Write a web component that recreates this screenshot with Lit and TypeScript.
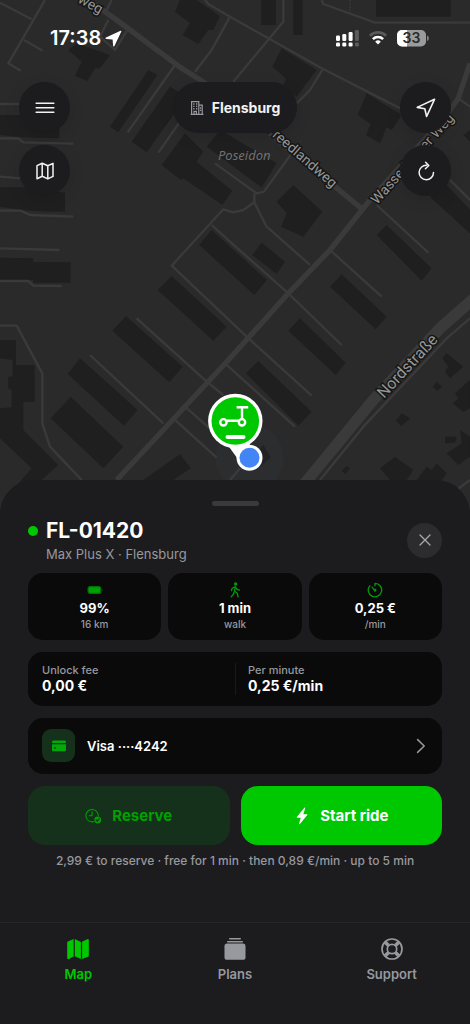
import { LitElement, html, css, svg } from "lit";
import { customElement, property } from "lit/decorators.js";

const icons = {
  menu: svg`<svg viewBox="0 0 20 20" width="20" height="20" fill="none" stroke="currentColor" stroke-width="1.6" stroke-linecap="round"><path d="M1.2 5.3h17.6M1.2 9.8h17.6M1.2 14.3h17.6"/></svg>`,
  map: svg`<svg viewBox="0 0 20 20" width="20" height="20" fill="none" stroke="currentColor" stroke-width="1.5" stroke-linejoin="round"><path d="M2 4.6 7.2 2.2l5.6 2.6L18 2.4v13l-5.2 2.5-5.6-2.6L2 17.7zM7.2 2.2v13.1M12.8 4.8v13.1"/></svg>`,
  locate: svg`<svg viewBox="0 0 22 22" width="22" height="22" fill="none" stroke="currentColor" stroke-width="1.6" stroke-linejoin="round"><path d="M19.5 2.3 2.2 10.4 9.8 11.8 11.6 19.5z"/></svg>`,
  reload: svg`<svg viewBox="0 0 20 20" width="20" height="20" fill="none" stroke="currentColor" stroke-width="1.5" stroke-linecap="round" stroke-linejoin="round"><path d="M10.6 4.3A7.2 7.2 0 1 0 17.5 11.5M9.6 1.2l3.2 3.3-3.4 3.2"/></svg>`,
  building: svg`<svg viewBox="0 0 14 16" width="14" height="16" fill="none" stroke="currentColor" stroke-width="1.2"><path d="M1.6 14.4V1.6h7.2v12.8M8.8 5.2h3.4v9.2M.6 14.4h12.8"/><path d="M3.2 4h1.3M6 4h1.3M3.2 6.4h1.3M6 6.4h1.3M3.2 8.8h1.3M6 8.8h1.3M10 8h1.2M10 10.4h1.2" stroke-width="1.4"/><path d="M4 14.4v-3h2.4v3"/></svg>`,
  close: svg`<svg viewBox="0 0 12 12" width="12" height="12" fill="none" stroke="currentColor" stroke-width="1.3" stroke-linecap="round"><path d="m1 1 10 10M11 1 1 11"/></svg>`,
  battery: svg`<svg viewBox="0 0 16 16" width="16" height="16"><rect x="1.1" y="4.6" width="12.6" height="6.8" rx="2" fill="#00a008" stroke="#007200" stroke-width="1.2"/><path d="M14.7 6.4c1 .3 1 2.9 0 3.2z" fill="#007200"/></svg>`,
  walk: svg`<svg viewBox="0 0 16 16" width="16" height="16" fill="none" stroke="currentColor" stroke-width="1.3" stroke-linecap="round" stroke-linejoin="round"><circle cx="8.6" cy="2" r="1" fill="currentColor"/><path d="M8.2 4.8 7.6 9l2.6 2.2.9 3.6M7.2 10 6.6 12l-2.4 2.8M8 4.7 5.2 6.2 4.5 8.6M8.6 5l1.4 2.4 2.4.8"/></svg>`,
  timer: svg`<svg viewBox="0 0 16 16" width="16" height="16" fill="none" stroke="currentColor" stroke-width="1.3" stroke-linecap="round"><path d="M8 1.4A6.7 6.7 0 1 1 2.8 3.8M8 1.4v2.4M8 8.4 5 5.1"/><circle cx="8" cy="8.3" r=".8" fill="currentColor"/></svg>`,
  card: svg`<svg viewBox="0 0 16 16" width="16" height="16" fill="currentColor"><path d="M1 5V4.2C1 3.2 1.6 2.6 2.6 2.6h10.8c1 0 1.6.6 1.6 1.6V5z"/><path fill-rule="evenodd" d="M1 6.3h14v5.4c0 1-.6 1.6-1.6 1.6H2.6c-1 0-1.6-.6-1.6-1.6zM3.2 9.2v1.5h1.6V9.2z"/></svg>`,
  chevron: svg`<svg viewBox="0 0 10 16" width="10" height="16" fill="none" stroke="currentColor" stroke-width="1.5" stroke-linecap="round" stroke-linejoin="round"><path d="m1.6 1.6 6.6 6.4-6.6 6.4"/></svg>`,
  reserve: svg`<svg viewBox="0 0 17 16" width="17" height="16" fill="none" stroke="currentColor" stroke-width="1.1" stroke-linecap="round" stroke-linejoin="round"><path d="M8.6 13.7A6.2 6.2 0 1 1 13.3 7.6M7.1 3.8v4H4.2"/><circle cx="12.7" cy="11.9" r="3.4" fill="currentColor" stroke="none"/><path d="m11.2 12 1.1 1.1 1.8-2.3" stroke="#15301b"/></svg>`,
  bolt: svg`<svg viewBox="-2 0 16 18" width="16" height="18" fill="currentColor"><path d="M8.4.8.8 9.9c-.3.4-.1.8.4.8h3.5l-1.6 6c-.1.6.4.8.8.4L11.3 8c.3-.4.1-.8-.4-.8H7.3l1.9-5.9c.2-.6-.4-.9-.8-.5z"/></svg>`,
  tabMap: svg`<svg viewBox="0 0 24 24" width="24" height="24" fill="currentColor"><path d="M1.2 5.5c0-.5.2-.9.7-1.1L7.6 2v17.4l-4.9 2.5c-.8.4-1.5 0-1.5-.9zM8.8 2.1l6.1 3v17l-6.1-2.9zM16.1 4.7l5.2-2.5c.9-.4 1.5 0 1.5.9v15.4c0 .5-.2.9-.7 1.2l-6 2.4z"/></svg>`,
  tabPlans: svg`<svg viewBox="0 0 24 24" width="24" height="24" fill="currentColor"><rect x="1.5" y="6.6" width="21" height="16.2" rx="2.6"/><rect x="4" y="3.9" width="16" height="1.5" rx=".75"/><rect x="6" y="1" width="12" height="1.4" rx=".7"/></svg>`,
  tabSupport: svg`<svg viewBox="0 0 24 24" width="24" height="24" fill="none" stroke="currentColor"><circle cx="12" cy="12" r="10" stroke-width="1.7"/><circle cx="12" cy="12" r="4.7" stroke-width="1.7"/><path d="m5.2 5.2 3.4 3.4M18.8 5.2l-3.4 3.4M5.2 18.8l3.4-3.4M18.8 18.8l-3.4-3.4" stroke-width="3.6"/></svg>`,
};

const buildings = [
  "540,0 525,35 570,70 548,105 595,132 625,90 640,90 660,48 590,0",
  "205,150 230,130 330,165 300,205 285,205 262,243 225,228 245,185",
  "445,210 472,225 355,397 330,380",
  "510,260 560,290 440,457 395,425",
  "485,495 555,400 610,455 590,485 697,572 667,615 550,535 543,540",
  "0,345 60,345 62,320 178,320 178,415 62,412 0,405",
  "0,562 80,562 195,578 195,636 80,632 0,620",
  "620,440 660,390 830,490 785,562",
  "783,0 828,0 828,75 783,75",
  "880,0 908,0 908,105 880,105",
  "1128,0 1352,0 1352,50 1128,50",
  "845,145 950,210 890,290 848,262 858,235 817,200",
  "1100,280 1205,345 1175,390 1160,382 1140,430 1098,405 1112,372 1073,345",
  "880,555 967,635 910,710 843,680 860,640 830,605",
  "1160,675 1295,805 1265,842 1130,705",
  "1290,590 1340,555 1420,640 1420,710",
  "1390,405 1410,390 1410,425",
  "0,773 100,775 100,786 212,787 212,848 100,848 100,840 0,840",
  "515,828 680,980 640,1022 473,870",
  "378,948 548,1100 508,1147 337,992",
  "240,1075 413,1230 372,1277 203,1122",
  "212,1190 370,1340 310,1405 152,1255",
  "635,690 800,840 763,885 598,735",
  "785,728 855,785 830,822 757,765",
  "1025,823 1160,950 1127,988 990,860",
  "900,955 1037,1088 1007,1125 865,992",
  "775,1083 935,1235 895,1277 738,1120",
  "540,1362 572,1405 520,1440 430,1440",
  "0,1020 48,1020 48,1095 104,1095 104,1205 70,1207 70,1290 175,1395 125,1440 30,1480 95,1405 0,1315 0,1225 35,1222 35,1170 25,1165 25,1130 38,1130 38,1080 0,1075",
  "1340,1060 1390,1100 1350,1135 1335,1115 1345,1100 1327,1075",
  "1310,1145 1327,1160 1312,1172 1298,1160",
  "1205,1240 1230,1255 1205,1278 1188,1262",
  "1410,1140 1365,1180 1375,1195 1358,1210 1390,1235 1410,1225",
  "1335,1310 1370,1310 1365,1328 1335,1330",
  "1380,1290 1410,1310 1410,1370 1375,1395 1340,1360 1385,1330",
  "1185,1370 1240,1410 1220,1440 1170,1440 1140,1405",
  "1310,1390 1340,1420 1320,1450 1250,1440 1280,1400 1295,1410",
  "1040,1398 1050,1405 1035,1422 1025,1412",
  "790,1335 812,1372 770,1410 745,1390",
];

const lanes = [
  "0,8 95,58", "135,0 25,190 62,212", "72,120 128,152", "335,0 320,30",
  "325,60 300,110 345,150 385,85", "525,195 383,397", "620,250 475,458",
  "585,215 635,150 690,50", "615,0 625,12 690,50 805,115 965,205 1200,325",
  "0,312 60,312", "0,415 55,415 70,427 220,431", "0,530 60,535",
  "0,632 62,632 90,645 220,650", "0,745 178,750", "965,0 970,12 1125,68 1410,68",
  "850,0 850,65 700,245", "970,205 930,270 890,310",
  "1375,295 1410,320", "1130,615 1285,758", "1350,540 1410,600",
  "645,490 770,580 792,575 875,460", "763,580 763,607 800,680 930,795",
  "763,607 730,630 700,637 670,628 515,797 740,1010 935,1187",
  "635,675 690,725 865,880 1025,1035", "990,750 1145,890",
  "410,955 620,1145 670,1185", "270,1065 490,1270", "520,1255 650,1373",
  "555,1220 640,1295", "675,1090 885,1280", "0,843 85,843 100,857 185,858",
  "0,977 50,977 127,1120 127,1270 150,1340 245,1440",
  "1410,955 1340,1015 1090,1280 960,1440", "1370,1470 1410,1440",
  "690,1440 720,1405",
];

@customElement("city-map")
class CityMap extends LitElement {
  static styles = css`
    :host { display: block; }
    svg { display: block; width: 100%; height: 100%; }
    .ground { fill: #2a2a2a; }
    .buildings { fill: #1f1f1f; }
    .roads { fill: none; stroke: #3a3a3a; stroke-linejoin: round; }
    .lane { stroke-width: 7; }
    .dotted { stroke-width: 4; stroke-dasharray: 5 4; }
    .street { stroke-width: 16; }
    .main { stroke-width: 34; }
    .label {
      font: 14px Roboto, "Noto Sans", sans-serif;
      fill: #969696;
      stroke: #161616;
      stroke-width: 3px;
      paint-order: stroke;
    }
    .large { font-size: 16px; }
    .place { font: italic 13px "Noto Sans", sans-serif; fill: #707070; stroke: none; }
  `;

  render() {
    return html`<svg viewBox="0 0 470 1024" preserveAspectRatio="xMidYMin slice" role="img" aria-label="Map of Flensburg">
      <rect class="ground" width="470" height="1024" />
      <g transform="scale(.33333)">
        <g class="buildings">${buildings.map((p) => svg`<polygon points=${p} />`)}</g>
        <g class="roads">
          ${lanes.map((p) => svg`<polyline class="lane" points=${p} />`)}
          <path class="dotted" d="M1050 0v36" />
          <path class="street" d="M180-60 350 60 545 205 640 265 810 400 1090 630" />
          <path class="street" d="M1410 190 1375 295 1340 345 1110 600 990 750 865 880 690 1075 350 1440" />
          <path class="main" d="M1430 888 1320 985 1120 1200 910 1455" />
        </g>
      </g>
      <text class="label" transform="translate(77 2) rotate(28)">weg</text>
      <text class="label" transform="translate(266 131) rotate(41)">Freedlandweg</text>
      <text class="label" transform="translate(377 205) rotate(-48)">Wasserlooser Weg</text>
      <text class="label large" transform="translate(384 399) rotate(-47)">Nordstraße</text>
      <text class="label place" x="218" y="160">Poseidon</text>
      <circle cx="249.5" cy="458" r="34" fill="#4a78a8" fill-opacity=".04" />
      <path d="M227 444 240 462 250 444z" fill="#fff" />
      <circle cx="235.3" cy="421" r="27.2" fill="#fff" />
      <circle cx="235.3" cy="421" r="23.8" fill="#00c800" />
      <g fill="none" stroke="#fff" stroke-width="2.4">
        <circle cx="223.4" cy="422.3" r="3.2" />
        <circle cx="242" cy="422.3" r="3.2" />
        <path d="M226.5 420.800h12.500M242 419v-11.800M236.600 407.200h11.600" />
        <path d="M227.5 437h16" stroke-width="4" stroke-linecap="round" />
      </g>
      <circle cx="249.5" cy="457.7" r="13" fill="#fff" />
      <circle cx="249.5" cy="457.7" r="10" fill="#4285f4" />
    </svg>`;
  }
}

@customElement("stat-tile")
class StatTile extends LitElement {
  @property() value = "";
  @property() caption = "";

  static styles = css`
    :host {
      display: flex;
      flex-direction: column;
      align-items: center;
      padding: 8px 8px 9px;
      border-radius: 15px;
      background: #0a0a0a;
      color: #009b0a;
    }
    .icon { display: flex; height: 18px; align-items: center; }
    .value { color: #fff; font-size: 13px; line-height: 18px; font-weight: 700; }
    .caption { color: #98989f; font-size: 10px; line-height: 14px; font-weight: 500; }
  `;

  render() {
    return html`<div class="icon"><slot></slot></div>
      <div class="value">${this.value}</div>
      <div class="caption">${this.caption}</div>`;
  }
}

@customElement("app-root")
class AppRoot extends LitElement {
  static styles = css`
    :host {
      display: block;
      color: #fff;
      background: #1c1c1e;
      font-family: Inter, "Liberation Sans", sans-serif;
    }
    * { box-sizing: border-box; }
    svg { display: block; flex: none; }
    button { font: inherit; color: inherit; border: 0; margin: 0; padding: 0; cursor: pointer; }
    h1, p, dl, dd, dt { margin: 0; }
    .app { position: relative; display: flex; flex-direction: column; min-height: 100vh; overflow: hidden; }
    .backdrop { position: absolute; inset: 0; }
    .stage { position: relative; flex: 1; min-height: 400px; }
    .status { display: flex; justify-content: space-between; align-items: center; height: 76px; padding: 0 41px 0 50px; }
    .clock { display: flex; align-items: center; gap: 4px; font-size: 20px; line-height: 24px; font-weight: 600; }
    .signals { display: flex; align-items: center; gap: 10px; }
    .controls { display: grid; grid-template-columns: 51px auto 51px; justify-content: space-between; align-items: start; padding: 6px 19px 0; }
    .stack { display: grid; gap: 12px; }
    .round, .city { background: #1c1c1e; box-shadow: 0 4px 16px rgb(0 0 0 / 12%); color: #f2f2f2; }
    .round { display: grid; place-items: center; width: 51px; height: 51px; border-radius: 50%; }
    .city { display: flex; align-items: center; gap: 8px; height: 51px; padding: 0 17px; border-radius: 26px; font-size: 14px; font-weight: 700; }
    .city svg { color: #98989f; }

    .sheet { position: relative; display: flex; flex-direction: column; padding: 21px 28px 53px; background: #1c1c1e; border-radius: 34px 34px 0 0; }
    .handle { align-self: center; width: 47px; height: 5px; border-radius: 3px; background: #3a3a3c; }
    .head { display: flex; align-items: center; margin: 11px 0 10px; }
    .vehicle { flex: 1; display: grid; grid-template-columns: 10px 1fr; column-gap: 8px; align-items: center; }
    .dot { width: 10px; height: 10px; border-radius: 50%; background: #00c800; }
    h1 { font-size: 21px; line-height: 28px; font-weight: 700; }
    .model { grid-column: 2; font-size: 13px; line-height: 18px; color: #98989f; }
    .close { display: grid; place-items: center; width: 35px; height: 35px; border-radius: 50%; background: #2c2c2e; color: #a8a8ad; }
    .panels { display: grid; gap: 12px; }
    .stats { display: grid; grid-template-columns: repeat(3, 1fr); gap: 7px; }
    .fees { display: grid; grid-template-columns: 1fr 1fr; padding: 11px 14px; border-radius: 15px; background: #0a0a0a; }
    .fee + .fee { padding-left: 12px; border-left: 1px solid #1a1a1c; }
    dt { font-size: 11px; line-height: 14px; font-weight: 500; color: #98989f; }
    dd { font-size: 14px; line-height: 18px; font-weight: 700; }
    .payment { display: flex; align-items: center; gap: 12px; width: 100%; padding: 11px 16px 12px 14px; border-radius: 15px; background: #0a0a0a; text-align: left; font-size: 13px; font-weight: 600; }
    .payment-icon { display: grid; place-items: center; width: 33px; height: 33px; border-radius: 9px; background: #15301b; color: #00a80a; }
    .payment-name { flex: 1; }
    .chevron { color: #98989f; }
    .actions { display: grid; grid-template-columns: 1fr 1fr; gap: 11px; }
    .action { display: flex; align-items: center; justify-content: center; gap: 10px; height: 59px; border-radius: 17px; font-size: 15px; font-weight: 700; }
    .reserve { background: #15301b; color: #00a000; }
    .start { background: #00c800; color: #fff; }
    .note { margin-top: 8px; font-size: 12px; line-height: 16px; font-weight: 500; text-align: center; color: #98989f; }

    .tabs { position: relative; display: grid; grid-template-columns: repeat(3, 1fr); height: 102px; padding-top: 14px; border-top: 1px solid #262628; background: #1c1c1e; }
    .tab { display: flex; flex-direction: column; align-items: center; gap: 4px; color: #98989f; font-size: 13px; line-height: 18px; font-weight: 600; text-decoration: none; }
    .tab[aria-current] { color: #00c800; }
  `;

  private stats = [
    { icon: icons.battery, value: "99%", caption: "16 km" },
    { icon: icons.walk, value: "1 min", caption: "walk" },
    { icon: icons.timer, value: "0,25 €", caption: "/min" },
  ];

  render() {
    return html`
      <div class="app">
        <city-map class="backdrop"></city-map>
        <div class="stage">
          <div class="status">
            <div class="clock">
              <span>17:38</span>
              <svg viewBox="0 0 17 17" width="17" height="17" fill="#fff"><path d="M15.6.8 1 7.6c-.8.4-.6 1.3.2 1.4l6.4.4.5 6.4c.1.8 1 1 1.4.2L16.3 1.5c.2-.5-.2-.9-.7-.7z" /></svg>
            </div>
            <div class="signals">
              <svg viewBox="0 0 23 17" width="23" height="17" fill="#fff">
                <rect x="0" y="5.5" width="4" height="5.5" rx="1.2" /><rect x="6.3" y="4" width="4" height="7" rx="1.2" /><rect x="12.6" y="2" width="4" height="9" rx="1.2" /><rect x="18.9" y="0" width="4" height="11" rx="1.2" fill="#5a5a5a" />
                <rect x="0" y="12.5" width="4" height="4" rx="1.2" /><rect x="6.3" y="12.5" width="4" height="4" rx="1.2" /><rect x="12.6" y="12.5" width="4" height="4" rx="1.2" /><rect x="18.9" y="12.5" width="4" height="4" rx="1.2" fill="#5a5a5a" />
              </svg>
              <svg viewBox="0 0 18 14" width="18" height="14" fill="none" stroke-width="2.6"><path d="M.9 4.7a11.6 11.6 0 0 1 16.2 0" stroke="#5a5a5a" /><path d="M3.9 8.1a7.3 7.3 0 0 1 10.2 0" stroke="#fff" /><path d="M9 13.6 6.2 10.7a4 4 0 0 1 5.6 0z" fill="#fff" /></svg>
              <svg viewBox="0 0 32 17" width="32" height="17">
                <rect width="29" height="16.5" rx="5" fill="#9b9b9b" /><path d="M5 0h5v16.5H5a5 5 0 0 1-5-5V5a5 5 0 0 1 5-5z" fill="#fff" /><path d="M30.2 5.5c2 .8 2 4.7 0 5.500z" fill="#9b9b9b" />
                <text x="14.5" y="13" text-anchor="middle" font-size="14" font-weight="600" fill="#2a2a2a">33</text>
              </svg>
            </div>
          </div>
          <div class="controls">
            <div class="stack">
              <button class="round" aria-label="Menu">${icons.menu}</button>
              <button class="round" aria-label="Map style">${icons.map}</button>
            </div>
            <button class="city">${icons.building}<span>Flensburg</span></button>
            <div class="stack">
              <button class="round" aria-label="My location">${icons.locate}</button>
              <button class="round" aria-label="Refresh">${icons.reload}</button>
            </div>
          </div>
        </div>

        <section class="sheet">
          <div class="handle"></div>
          <header class="head">
            <div class="vehicle">
              <span class="dot"></span>
              <h1>FL-01420</h1>
              <p class="model">Max Plus X · Flensburg</p>
            </div>
            <button class="close" aria-label="Close">${icons.close}</button>
          </header>
          <div class="panels">
            <div class="stats">
              ${this.stats.map((s) => html`<stat-tile .value=${s.value} .caption=${s.caption}>${s.icon}</stat-tile>`)}
            </div>
            <dl class="fees">
              <div class="fee"><dt>Unlock fee</dt><dd>0,00 €</dd></div>
              <div class="fee"><dt>Per minute</dt><dd>0,25 €/min</dd></div>
            </dl>
            <button class="payment">
              <span class="payment-icon">${icons.card}</span>
              <span class="payment-name">Visa ····4242</span>
              <span class="chevron">${icons.chevron}</span>
            </button>
            <div class="actions">
              <button class="action reserve">${icons.reserve}<span>Reserve</span></button>
              <button class="action start">${icons.bolt}<span>Start ride</span></button>
            </div>
          </div>
          <p class="note">2,99 € to reserve · free for 1 min · then 0,89 €/min · up to 5 min</p>
        </section>

        <nav class="tabs">
          <a class="tab" href="#map" aria-current="page">${icons.tabMap}<span>Map</span></a>
          <a class="tab" href="#plans">${icons.tabPlans}<span>Plans</span></a>
          <a class="tab" href="#support">${icons.tabSupport}<span>Support</span></a>
        </nav>
      </div>
    `;
  }
}
